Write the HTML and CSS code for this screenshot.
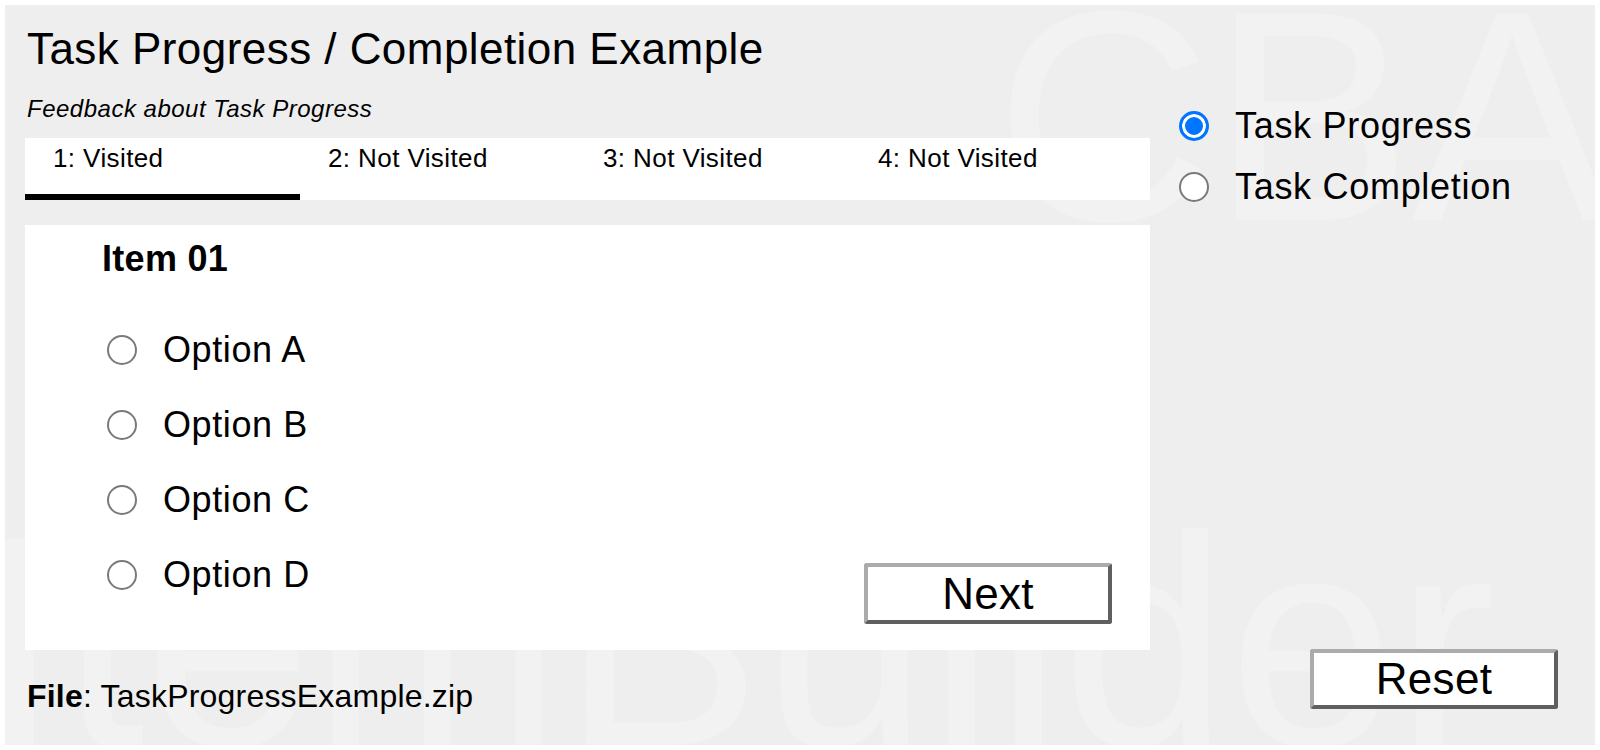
FILE: index.html
```html
<!DOCTYPE html>
<html lang="en">
<head>
<meta charset="utf-8">
<title>Task Progress / Completion Example</title>
<link rel="stylesheet" href="styles.css">
</head>
<body>
<div class="frame">
  <div class="watermark wm-cba" aria-hidden="true">CBA</div>
  <div class="watermark wm-ib" aria-hidden="true">ItemBuilder</div>

  <div class="left">
    <h1 class="title">Task Progress / Completion Example</h1>
    <div class="feedback">Feedback about Task Progress</div>
    <div class="tabs">
      <div class="tab active">1: Visited</div>
      <div class="tab">2: Not Visited</div>
      <div class="tab">3: Not Visited</div>
      <div class="tab">4: Not Visited</div>
    </div>
    <div class="panel">
      <div class="question">
        <div class="item-title">Item 01</div>
        <div class="option"><span class="radio"></span><span class="opt-label">Option A</span></div>
        <div class="option"><span class="radio"></span><span class="opt-label">Option B</span></div>
        <div class="option"><span class="radio"></span><span class="opt-label">Option C</span></div>
        <div class="option"><span class="radio"></span><span class="opt-label">Option D</span></div>
      </div>
      <div class="panel-actions">
        <button class="btn">Next</button>
      </div>
    </div>
    <div class="file"><b>File</b>: TaskProgressExample.zip</div>
  </div>

  <div class="right">
    <div class="mode-group">
      <div class="mode"><span class="radio checked"></span><span class="mode-label">Task Progress</span></div>
      <div class="mode"><span class="radio"></span><span class="mode-label">Task Completion</span></div>
    </div>
    <button class="btn reset">Reset</button>
  </div>
</div>
</body>
</html>
```

FILE: styles.css
```css
html, body {
  margin: 0;
  padding: 0;
  background: #ffffff;
}

body {
  font-family: "Liberation Sans", Arial, sans-serif;
  color: #000;
}

.frame {
  position: relative;
  margin: 5px;
  width: 1590px;
  height: 740px;
  background: #eeeeee;
  overflow: hidden;
  display: flex;
}

.watermark {
  position: absolute;
  color: #f2f2f2;
  font-family: "Liberation Sans", Arial, sans-serif;
  font-weight: normal;
  font-size: 300px;
  white-space: nowrap;
  line-height: 1;
  z-index: 0;
}

.wm-cba {
  left: 990px;
  top: -39px;
}

.wm-ib {
  left: -27px;
  top: 486px;
}

.left {
  position: relative;
  z-index: 1;
  width: 1125px;
  margin-left: 20px;
  padding-top: 19px;
  display: flex;
  flex-direction: column;
}

.title {
  margin: 0 0 0 2px;
  font-size: 44px;
  font-weight: normal;
  line-height: 50px;
  letter-spacing: 0.45px;
  white-space: nowrap;
}

.feedback {
  margin: 20px 0 0 2px;
  font-size: 24px;
  font-style: italic;
  line-height: 30px;
  letter-spacing: 0.5px;
}

.tabs {
  margin-top: 14px;
  height: 62px;
  background: #fff;
  display: flex;
}

.tab {
  box-sizing: border-box;
  width: 275px;
  height: 62px;
  padding: 5px 0 0 28px;
  font-size: 26px;
  line-height: 30px;
  letter-spacing: 0.4px;
  white-space: nowrap;
}

.tab.active {
  border-bottom: 6px solid #000;
}

.panel {
  margin-top: 25px;
  height: 425px;
  background: #fff;
  display: flex;
}

.question {
  padding: 14px 0 0 77px;
}

.item-title {
  font-size: 36px;
  font-weight: bold;
  line-height: 40px;
  letter-spacing: 0.3px;
  margin-bottom: 33px;
}

.option {
  height: 75px;
  display: flex;
  align-items: center;
  margin-left: 5px;
}

.opt-label {
  font-size: 36px;
  letter-spacing: 0.6px;
  margin-left: 26px;
}

.radio {
  box-sizing: border-box;
  width: 30px;
  height: 30px;
  flex: none;
  border-radius: 50%;
  border: 2px solid #7a7a7a;
  background: #fff;
}

.radio.checked {
  border: 3px solid #0075ff;
  background: #0075ff;
  box-shadow: inset 0 0 0 3px #fff;
}

.panel-actions {
  flex: 1;
  display: flex;
  justify-content: flex-end;
  align-items: flex-end;
  padding: 0 38px 26px 0;
}

.btn {
  box-sizing: border-box;
  width: 248px;
  height: 61px;
  padding: 0;
  background: #fff;
  border: 4px solid;
  border-color: #ababab #5f5f5f #5f5f5f #ababab;
  border-radius: 3px;
  font-family: "Liberation Sans", Arial, sans-serif;
  font-size: 44px;
  letter-spacing: 0.3px;
  line-height: 1;
  color: #000;
}

.file {
  margin: 28px 0 0 2px;
  font-size: 32px;
  line-height: 36px;
  letter-spacing: 0.2px;
  white-space: nowrap;
}

.right {
  position: relative;
  z-index: 1;
  flex: 1;
  display: flex;
  flex-direction: column;
  padding-left: 29px;
}

.mode-group {
  margin-top: 90px;
}

.mode {
  height: 61px;
  display: flex;
  align-items: center;
}

.mode-label {
  font-size: 36px;
  letter-spacing: 0.7px;
  margin-left: 26px;
  white-space: nowrap;
}

.reset {
  margin-top: auto;
  align-self: flex-end;
  margin-right: 37px;
  margin-bottom: 36px;
  height: 60px;
}
```
